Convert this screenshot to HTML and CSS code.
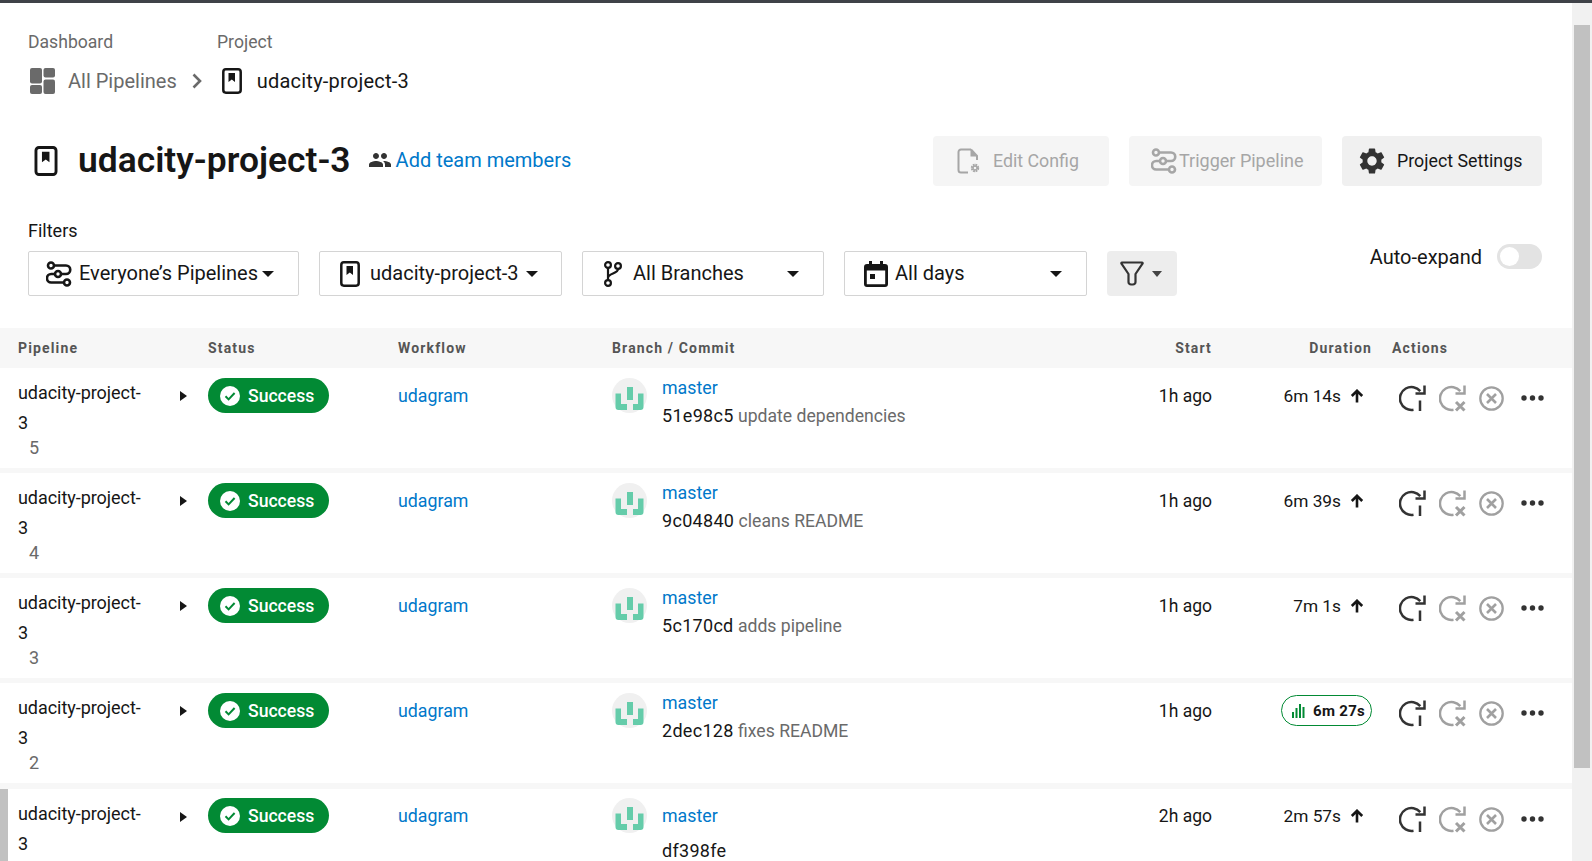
FILE: index.html
```html
<!DOCTYPE html>
<html lang="en">
<head>
  <meta charset="UTF-8">
  <meta name="viewport" content="width=device-width, initial-scale=1.0">
  <title>udacity-project-3 - Pipelines</title>
  <link rel="stylesheet" href="styles.css">
</head>
<body>
  <svg class="defs" aria-hidden="true">
    <symbol id="i-project" viewBox="0 0 20 26">
      <rect x="1.3" y="1.3" width="17.4" height="23.4" rx="2.6" fill="none" stroke="currentColor" stroke-width="2.5"/>
      <path d="M6.5 5h6.5v9l-3.2-2.4L6.5 14z" fill="currentColor"/>
    </symbol>
    <symbol id="i-pipes" viewBox="0 0 26 26">
      <g fill="none" stroke="currentColor" stroke-width="2.6">
        <circle cx="5" cy="4.5" r="3"/>
        <circle cx="12" cy="13" r="3"/>
        <circle cx="21" cy="21.5" r="3"/>
        <path d="M8 4.5h12a4.2 4.2 0 0 1 0 8.5h-5"/>
        <path d="M9 13H5.2a4.2 4.2 0 0 0 0 8.500H18"/>
      </g>
    </symbol>
    <symbol id="i-doc" viewBox="0 0 24 26">
      <path d="M14 1.500H4A2.500 2.500 0 0 0 1.500 4v18A2.500 2.500 0 0 0 4 24.500h7M14 1.500l6 6.500v4" fill="none" stroke="currentColor" stroke-width="2"/>
      <path d="M13.500 1.500v7h6.500z" fill="currentColor"/>
      <circle cx="18" cy="20" r="3" fill="none" stroke="currentColor" stroke-width="2.400" stroke-dasharray="1.700 .65"/>
      <circle cx="18" cy="20" r="1.900" fill="none" stroke="currentColor" stroke-width="1.100"/>
    </symbol>
    <symbol id="i-gear" viewBox="2 2 20 20">
      <path fill="currentColor" d="M19.140 12.940c.04-.3.06-.61.06-.94 0-.32-.02-.64-.07-.94l2.030-1.580c.18-.14.23-.41.12-.61l-1.920-3.320c-.12-.22-.37-.29-.59-.22l-2.390.96c-.5-.38-1.030-.7-1.620-.94l-.36-2.540c-.04-.24-.24-.41-.48-.41h-3.840c-.24 0-.43.17-.47.41l-.36 2.540c-.59.24-1.130.57-1.620.94l-2.390-.96c-.22-.08-.47 0-.59.22L2.740 8.870c-.12.21-.08.47.12.61l2.030 1.580c-.05.3-.09.63-.09.94s.02.64.07.94l-2.030 1.580c-.18.14-.23.41-.12.61l1.920 3.320c.12.22.37.29.59.22l2.390-.96c.5.38 1.030.7 1.620.94l.36 2.540c.05.24.24.41.48.41h3.840c.24 0 .44-.17.47-.41l.36-2.540c.59-.24 1.130-.56 1.620-.94l2.390.96c.22.08.47 0 .59-.22l1.920-3.320c.12-.22.07-.47-.12-.61l-2.010-1.580zM12 15.600c-1.980 0-3.600-1.620-3.600-3.600s1.620-3.600 3.600-3.600 3.600 1.620 3.600 3.600-1.620 3.600-3.600 3.600z"/>
    </symbol>
    <symbol id="i-dash" viewBox="0 0 25 26">
      <g fill="currentColor">
        <rect x="0" y="0" width="12" height="15.500" rx="2"/>
        <rect x="0" y="17" width="12" height="9" rx="2"/>
        <rect x="13.500" y="0" width="11.500" height="9.500" rx="2"/>
        <rect x="13.500" y="11.500" width="11.500" height="14.500" rx="2"/>
      </g>
    </symbol>
    <symbol id="i-people" viewBox="1 5 22 14">
      <path fill="currentColor" d="M16 11c1.660 0 2.990-1.340 2.990-3S17.660 5 16 5c-1.660 0-3 1.340-3 3s1.340 3 3 3zm-8 0c1.660 0 2.990-1.340 2.990-3S9.660 5 8 5C6.340 5 5 6.340 5 8s1.340 3 3 3zm0 2c-2.330 0-7 1.170-7 3.500V19h14v-2.500c0-2.330-4.670-3.500-7-3.500zm8 0c-.29 0-.62.02-.97.05 1.160.84 1.970 1.970 1.970 3.450V19h6v-2.500c0-2.330-4.670-3.500-7-3.500z"/>
    </symbol>
    <symbol id="i-branch" viewBox="0 0 20 26">
      <g fill="none" stroke="currentColor" stroke-width="2.200">
        <circle cx="5" cy="4" r="2.900"/>
        <circle cx="15" cy="5" r="2.900"/>
        <circle cx="5" cy="22" r="2.900"/>
        <path d="M5 7v12M15 8c0 5-10 4-10 9"/>
      </g>
    </symbol>
    <symbol id="i-cal" viewBox="0 0 24 26">
      <path fill="currentColor" fill-rule="evenodd" d="M5 0h3v3h8V0h3v3h2a3 3 0 0 1 3 3v17a3 3 0 0 1-3 3H3a3 3 0 0 1-3-3V6a3 3 0 0 1 3-3h2zM2.800 9.500V23.200h18.400V9.500zM6 13h5v5H6z"/>
    </symbol>
    <symbol id="i-funnel" viewBox="0 0 24 25">
      <path d="M2 1.500h20c.6 0 .9.7.5 1.200L15.500 13v8a2.500 2.500 0 0 1-2.500 2.500h-2A2.500 2.500 0 0 1 8.500 21V13L1.500 2.700c-.4-.5-.1-1.200.5-1.200z" fill="none" stroke="currentColor" stroke-width="2.200" stroke-linejoin="round"/>
    </symbol>
    <symbol id="i-check" viewBox="0 0 20 20">
      <circle cx="10" cy="10" r="10" fill="#fff"/>
      <path d="M5.500 10.300l3.100 3.100 6-6.400" fill="none" stroke="#028a34" stroke-width="2"/>
    </symbol>
    <symbol id="i-logo" viewBox="0 0 35 35">
      <circle cx="17.500" cy="17.500" r="17.500" fill="#f0f0f0"/>
      <path fill="#65ccaa" d="M15 9h6v13h-6zM3.500 15.500H9V26h6v6H6.500a3 3 0 0 1-3-3zM31.500 15.500H26V26h-5v6h7.500a3 3 0 0 0 3-3z"/>
    </symbol>
    <symbol id="i-up" viewBox="0 0 14 14">
      <path d="M7 13.500V2M1.800 7L7 1.800 12.200 7" fill="none" stroke="currentColor" stroke-width="2.600"/>
    </symbol>
    <symbol id="i-bars" viewBox="0 0 13 14">
      <path fill="currentColor" d="M0 8h2v6H0zM3.500 4h2v10h-2zM7 0h2v14H7zM10.500 3h2v11h-2z"/>
    </symbol>
    <symbol id="i-rerun" viewBox="0 0 27 27">
      <g fill="none" stroke="currentColor" stroke-width="2.500">
        <path d="M21.300 6.100A11.500 11.500 0 1 0 14.500 24.800"/>
        <path d="M25.500.5v8h-9M21 15.500V26"/>
      </g>
    </symbol>
    <symbol id="i-rerun-x" viewBox="0 0 27 27">
      <g fill="none" stroke="currentColor" stroke-width="2.500">
        <path d="M21.300 6.100A11.500 11.500 0 1 0 14.500 24.800"/>
        <path d="M25.500.5v8h-9"/>
        <path d="M17 17l8.500 8.500M25.500 17L17 25.500" stroke-width="3"/>
      </g>
    </symbol>
    <symbol id="i-cancel" viewBox="0 0 25 25">
      <g fill="none" stroke="currentColor" stroke-width="2.300">
        <circle cx="12.500" cy="12.500" r="11.200"/>
        <path d="M8 8l9 9M17 8l-9 9" stroke-width="2.600"/>
      </g>
    </symbol>
    <symbol id="i-dots" viewBox="0 0 23 6">
      <g fill="currentColor"><circle cx="3" cy="3" r="2.700"/><circle cx="11.500" cy="3" r="2.700"/><circle cx="20" cy="3" r="2.700"/></g>
    </symbol>
  </svg>

  <div class="topbar"></div>
  <div class="frame">
    <main class="page">
      <div class="head">
        <div class="crumb-labels">
          <span class="crumb-label crumb-label-first">Dashboard</span>
          <span class="crumb-label">Project</span>
        </div>
        <nav class="crumbs">
          <svg class="ic-dash"><use href="#i-dash"/></svg>
          <span class="crumb-link">All Pipelines</span>
          <svg class="ic-chevron" viewBox="0 0 10 16"><path d="M1.500 1.500L8 8l-6.500 6.500" fill="none" stroke="currentColor" stroke-width="2.600"/></svg>
          <svg class="ic-project"><use href="#i-project"/></svg>
          <span class="crumb-current">udacity-project-3</span>
        </nav>

        <div class="title-row">
          <svg class="ic-title"><use href="#i-project"/></svg>
          <h1>udacity-project-3</h1>
          <a class="team-link">
            <svg class="ic-people"><use href="#i-people"/></svg>
            Add team members
          </a>
          <div class="head-buttons">
            <button class="btn btn-off btn-config"><svg class="ic-doc"><use href="#i-doc"/></svg>Edit Config</button>
            <button class="btn btn-off btn-trigger"><svg class="ic-pipes-btn"><use href="#i-pipes"/></svg>Trigger Pipeline</button>
            <button class="btn btn-settings"><svg class="ic-gear"><use href="#i-gear"/></svg>Project Settings</button>
          </div>
        </div>

        <div class="filters-label">Filters</div>
        <div class="filters">
          <div class="select select-who"><svg class="ic-pipes"><use href="#i-pipes"/></svg><span class="select-text">Everyone’s Pipelines</span><span class="caret"></span></div>
          <div class="select select-proj"><svg class="ic-project"><use href="#i-project"/></svg><span class="select-text">udacity-project-3</span><span class="caret"></span></div>
          <div class="select select-branch"><svg class="ic-branch"><use href="#i-branch"/></svg><span class="select-text">All Branches</span><span class="caret"></span></div>
          <div class="select select-days"><svg class="ic-cal"><use href="#i-cal"/></svg><span class="select-text">All days</span><span class="caret"></span></div>
          <button class="filter-btn"><svg class="ic-funnel"><use href="#i-funnel"/></svg><span class="caret caret-grey"></span></button>
          <div class="auto-expand">
            <span>Auto-expand</span>
            <span class="toggle"><span class="knob"></span></span>
          </div>
        </div>
      </div>

      <div class="table">
        <div class="row row-head">
          <div class="th th-first">Pipeline</div>
          <div class="th">Status</div>
          <div class="th">Workflow</div>
          <div class="th">Branch / Commit</div>
          <div class="th th-right">Start</div>
          <div class="th th-right">Duration</div>
          <div class="th th-actions">Actions</div>
        </div>

        <div class="row">
          <div class="cell-pipe"><div class="pipe-name"><span>udacity-project-<br>3</span><span class="expander"></span></div><div class="pipe-num">5</div></div>
          <div><span class="badge"><svg class="ic-check"><use href="#i-check"/></svg>Success</span></div>
          <div><a class="link wf">udagram</a></div>
          <div class="cell-commit"><svg class="logo"><use href="#i-logo"/></svg><div><a class="link branch">master</a><div class="commit"><span class="sha">51e98c5</span> update dependencies</div></div></div>
          <div class="cell-start">1h ago</div>
          <div class="cell-dur">6m 14s<svg class="ic-up"><use href="#i-up"/></svg></div>
          <div class="actions"><svg class="a-rerun"><use href="#i-rerun"/></svg><svg class="a-rerun-x"><use href="#i-rerun-x"/></svg><svg class="a-cancel"><use href="#i-cancel"/></svg><svg class="a-dots"><use href="#i-dots"/></svg></div>
        </div>

        <div class="row">
          <div class="cell-pipe"><div class="pipe-name"><span>udacity-project-<br>3</span><span class="expander"></span></div><div class="pipe-num">4</div></div>
          <div><span class="badge"><svg class="ic-check"><use href="#i-check"/></svg>Success</span></div>
          <div><a class="link wf">udagram</a></div>
          <div class="cell-commit"><svg class="logo"><use href="#i-logo"/></svg><div><a class="link branch">master</a><div class="commit"><span class="sha">9c04840</span> cleans README</div></div></div>
          <div class="cell-start">1h ago</div>
          <div class="cell-dur">6m 39s<svg class="ic-up"><use href="#i-up"/></svg></div>
          <div class="actions"><svg class="a-rerun"><use href="#i-rerun"/></svg><svg class="a-rerun-x"><use href="#i-rerun-x"/></svg><svg class="a-cancel"><use href="#i-cancel"/></svg><svg class="a-dots"><use href="#i-dots"/></svg></div>
        </div>

        <div class="row">
          <div class="cell-pipe"><div class="pipe-name"><span>udacity-project-<br>3</span><span class="expander"></span></div><div class="pipe-num">3</div></div>
          <div><span class="badge"><svg class="ic-check"><use href="#i-check"/></svg>Success</span></div>
          <div><a class="link wf">udagram</a></div>
          <div class="cell-commit"><svg class="logo"><use href="#i-logo"/></svg><div><a class="link branch">master</a><div class="commit"><span class="sha">5c170cd</span> adds pipeline</div></div></div>
          <div class="cell-start">1h ago</div>
          <div class="cell-dur">7m 1s<svg class="ic-up"><use href="#i-up"/></svg></div>
          <div class="actions"><svg class="a-rerun"><use href="#i-rerun"/></svg><svg class="a-rerun-x"><use href="#i-rerun-x"/></svg><svg class="a-cancel"><use href="#i-cancel"/></svg><svg class="a-dots"><use href="#i-dots"/></svg></div>
        </div>

        <div class="row">
          <div class="cell-pipe"><div class="pipe-name"><span>udacity-project-<br>3</span><span class="expander"></span></div><div class="pipe-num">2</div></div>
          <div><span class="badge"><svg class="ic-check"><use href="#i-check"/></svg>Success</span></div>
          <div><a class="link wf">udagram</a></div>
          <div class="cell-commit"><svg class="logo"><use href="#i-logo"/></svg><div><a class="link branch">master</a><div class="commit"><span class="sha">2dec128</span> fixes README</div></div></div>
          <div class="cell-start">1h ago</div>
          <div class="cell-dur cell-dur-best"><span class="best"><svg class="ic-bars"><use href="#i-bars"/></svg>6m 27s</span></div>
          <div class="actions"><svg class="a-rerun"><use href="#i-rerun"/></svg><svg class="a-rerun-x"><use href="#i-rerun-x"/></svg><svg class="a-cancel"><use href="#i-cancel"/></svg><svg class="a-dots"><use href="#i-dots"/></svg></div>
        </div>

        <div class="row row-marked">
          <div class="cell-pipe"><div class="pipe-name"><span>udacity-project-<br>3</span><span class="expander"></span></div></div>
          <div><span class="badge"><svg class="ic-check"><use href="#i-check"/></svg>Success</span></div>
          <div><a class="link wf">udagram</a></div>
          <div class="cell-commit"><svg class="logo"><use href="#i-logo"/></svg><div><a class="link branch">master</a><div class="commit"><span class="sha">df398fe</span></div></div></div>
          <div class="cell-start">2h ago</div>
          <div class="cell-dur">2m 57s<svg class="ic-up"><use href="#i-up"/></svg></div>
          <div class="actions"><svg class="a-rerun"><use href="#i-rerun"/></svg><svg class="a-rerun-x"><use href="#i-rerun-x"/></svg><svg class="a-cancel"><use href="#i-cancel"/></svg><svg class="a-dots"><use href="#i-dots"/></svg></div>
        </div>
      </div>
    </main>
    <div class="scrollbar"><div class="thumb"></div></div>
  </div>
</body>
</html>
```

FILE: styles.css
```css
html, body {
  height: 100%;
  overflow: hidden;
}
body {
  margin: 0;
  display: flex;
  flex-direction: column;
  font-family: Roboto, "Liberation Sans", sans-serif;
  font-size: 18px;
  color: #161616;
  background: #fff;
}
svg {
  display: block;
  flex: none;
}
.defs {
  width: 0;
  height: 0;
  position: absolute;
}
.topbar {
  height: 3px;
  background: #3f4248;
}
.frame {
  flex: 1;
  display: flex;
  min-height: 0;
}
.page {
  flex: 1;
  min-width: 0;
  overflow: hidden;
}
.scrollbar {
  width: 20px;
  background: #f1f1f1;
  padding: 22px 2px 0;
  box-sizing: border-box;
}
.thumb {
  height: 743px;
  background: #c1c1c1;
}

.head {
  padding: 28px 30px 0 28px;
  height: 298px;
  box-sizing: border-box;
}
.crumb-labels {
  display: flex;
  line-height: 22px;
  font-size: 17.600px;
  color: #6a6a6a;
}
.crumb-label-first {
  width: 189px;
}
.crumbs {
  display: flex;
  align-items: center;
  height: 26px;
  margin-top: 15px;
  font-size: 20px;
  padding-left: 2px;
}
.ic-dash {
  width: 25px;
  height: 26px;
  color: #6a6a6a;
}
.crumb-link {
  color: #6a6a6a;
  margin-left: 13px;
}
.ic-chevron {
  width: 10px;
  height: 16px;
  color: #6a6a6a;
  margin: 0 20px 0 15px;
}
.ic-project {
  width: 20px;
  height: 26px;
}
.crumb-current {
  margin-left: 15px;
  letter-spacing: .22px;
}

.title-row {
  display: flex;
  align-items: center;
  height: 50px;
  margin-top: 42px;
}
.ic-title {
  width: 24px;
  height: 30px;
  margin-left: 6px;
}
h1 {
  margin: -2px 0 0 20px;
  font-size: 35.400px;
  font-weight: 600;
}
.team-link {
  display: flex;
  align-items: center;
  color: #0078ca;
  font-size: 20px;
  margin: -2px 0 0 18px;
}
.ic-people {
  width: 22px;
  height: 14px;
  margin-right: 5px;
  color: #333;
}
.head-buttons {
  margin-left: auto;
  display: flex;
  gap: 20px;
}
.btn {
  display: flex;
  align-items: center;
  height: 50px;
  border: none;
  border-radius: 4px;
  background: #f0f0f0;
  font: inherit;
  font-size: 17.800px;
  color: #161616;
  padding: 0 0 2px;
  box-sizing: border-box;
  white-space: nowrap;
}
.btn svg {
  margin-top: 2px;
}
.btn-off {
  background: #f5f5f5;
  color: #a6a6a6;
}
.btn-config {
  width: 176px;
  padding-left: 24px;
}
.btn-trigger {
  width: 193px;
  padding-left: 22px;
  font-size: 18px;
}
.btn-settings {
  width: 200px;
  padding-left: 17px;
}
.ic-doc {
  width: 24px;
  height: 26px;
  margin-right: 12px;
}
.ic-pipes-btn {
  width: 26px;
  height: 26px;
  margin-right: 2px;
}
.ic-gear {
  width: 26px;
  height: 26px;
  margin-right: 12px;
  color: #333;
}

.filters-label {
  margin-top: 34px;
  line-height: 22px;
}
.filters {
  display: flex;
  gap: 20px;
  margin-top: 9px;
  position: relative;
}
.select {
  display: flex;
  align-items: center;
  height: 45px;
  box-sizing: border-box;
  border: 1px solid #d4d4d4;
  border-radius: 2px;
  font-size: 20px;
  padding-left: 17px;
}
.select svg {
  margin-bottom: -1px;
}
.select-who { width: 271px; }
.select-proj { width: 243px; padding-left: 20px; }
.select-branch { width: 242px; padding-left: 20px; }
.select-days { width: 243px; padding-left: 19px; }
.select-text {
  margin: -2px 0 0 7px;
}
.select-proj .select-text { margin-left: 10px; }
.select-branch .select-text { margin-left: 10px; }
.select-days .select-text { margin-left: 7px; }
.caret {
  width: 0;
  height: 0;
  border-left: 6px solid transparent;
  border-right: 6px solid transparent;
  border-top: 6px solid #161616;
  margin-left: 4px;
}
.select-proj .caret { margin-left: 8px; }
.select-branch .caret { margin-left: auto; margin-right: 24px; }
.select-days .caret { margin-left: auto; margin-right: 24px; }
.filter-btn .caret-grey {
  border-top-color: #444;
  border-left-width: 5.500px;
  border-right-width: 5.500px;
  margin-left: 8px;
}
.ic-pipes {
  width: 26px;
  height: 26px;
}
.ic-branch {
  width: 20px;
  height: 26px;
}
.ic-cal {
  width: 24px;
  height: 26px;
}
.filter-btn {
  display: flex;
  align-items: center;
  width: 70px;
  height: 45px;
  border: none;
  border-radius: 4px;
  background: #ededed;
  padding: 0 0 0 13px;
  box-sizing: border-box;
}
.ic-funnel {
  width: 24px;
  height: 25px;
  color: #333;
}
.auto-expand {
  margin-left: auto;
  margin-top: -7px;
  display: flex;
  align-items: center;
  gap: 15px;
  height: 25px;
  font-size: 20px;
}
.toggle {
  display: block;
  width: 45px;
  height: 25px;
  box-sizing: border-box;
  border-radius: 13px;
  background: #e3e3e3;
  padding: 3px;
}
.knob {
  display: block;
  width: 19px;
  height: 19px;
  border-radius: 50%;
  background: #fff;
}

.table {
  margin-top: 27px;
  background: #f7f7f7;
}
.row {
  display: grid;
  grid-template-columns: 208px 190px 214px 440px 160px 160px 200px;
  height: 100px;
  margin-bottom: 5px;
  background: #fff;
}
.row-head {
  height: 40px;
  margin-bottom: 0;
  align-items: center;
  background: #f7f7f7;
}
.th {
  font-size: 14px;
  font-weight: 700;
  letter-spacing: 1.150px;
  color: #555;
}
.th-first {
  padding-left: 18px;
}
.th-right {
  text-align: right;
}
.th-actions {
  padding-left: 20px;
}
.row-marked {
  margin-top: 6px;
  box-shadow: inset 8px 0 0 #c1c1c1;
}
.row > div {
  min-width: 0;
}
.cell-pipe {
  padding: 10px 0 0 18px;
  letter-spacing: -.05px;
}
.pipe-name {
  display: flex;
  line-height: 30px;
  justify-content: space-between;
  padding-right: 21px;
}
.expander {
  width: 0;
  height: 0;
  margin-top: 13px;
  border-top: 5.500px solid transparent;
  border-bottom: 5.500px solid transparent;
  border-left: 7px solid #161616;
}
.pipe-num {
  margin: -1px 0 0 11px;
  line-height: 21px;
  color: #6a6a6a;
}
.badge {
  display: inline-flex;
  align-items: center;
  width: 121px;
  height: 35px;
  margin-top: 10px;
  box-sizing: border-box;
  padding-left: 12px;
  border-radius: 18px;
  background: #028a34;
  color: #fff;
  font-size: 17.600px;
  font-weight: 500;
}
.row-marked .badge {
  margin-top: 9px;
}
.ic-check {
  width: 20px;
  height: 20px;
  margin-right: 8px;
}
.link {
  color: #0078ca;
}
.wf {
  display: block;
  margin-top: 17px;
  line-height: 22px;
  font-size: 17.800px;
}
.row-marked .wf {
  margin-top: 16px;
}
.cell-commit {
  display: flex;
  gap: 15px;
  padding-top: 10px;
}
.row-marked .cell-commit {
  padding-top: 9px;
}
.logo {
  width: 35px;
  height: 35px;
}
.branch {
  display: block;
  line-height: 22px;
  margin-top: -1px;
  font-size: 17.800px;
}
.row-marked .branch {
  margin-top: 7px;
}
.commit {
  margin-top: 6px;
  line-height: 22px;
  font-size: 17.600px;
  color: #6a6a6a;
}
.row-marked .commit {
  margin-top: 13px;
}
.sha {
  color: #161616;
  font-size: 18px;
  letter-spacing: .3px;
}
.cell-start {
  padding-top: 17px;
  line-height: 22px;
  text-align: right;
  font-size: 17.500px;
}
.cell-dur {
  display: flex;
  justify-content: flex-end;
  align-items: flex-start;
  padding-top: 17px;
  padding-right: 9px;
  line-height: 22px;
  font-size: 17.300px;
}
.row-marked .cell-start, .row-marked .cell-dur {
  padding-top: 16px;
}
.ic-up {
  width: 14px;
  height: 14px;
  margin: 4px -1px 0 9px;
}
.cell-dur-best {
  padding-right: 0;
  padding-top: 12px;
}
.best {
  display: flex;
  align-items: center;
  width: 91px;
  height: 31px;
  box-sizing: border-box;
  border: 1px solid #028a34;
  border-radius: 16px;
  padding: 0 0 0 10px;
  font-size: 15px;
  font-weight: 700;
  letter-spacing: .3px;
}
.ic-bars {
  width: 13px;
  height: 14px;
  margin: 0 8px 0 0;
  color: #028a34;
}
.actions {
  display: flex;
  align-items: flex-start;
  padding: 17px 0 0 27px;
}
.a-rerun, .a-rerun-x {
  width: 27px;
  height: 27px;
}
.a-rerun {
  color: #333;
}
.a-rerun-x {
  color: #a0a0a0;
  margin-left: 13px;
}
.a-cancel {
  width: 25px;
  height: 25px;
  color: #a0a0a0;
  margin: 1px 0 0 13px;
}
.a-dots {
  width: 23px;
  height: 6px;
  color: #333;
  margin: 10px 0 0 17px;
}
```
